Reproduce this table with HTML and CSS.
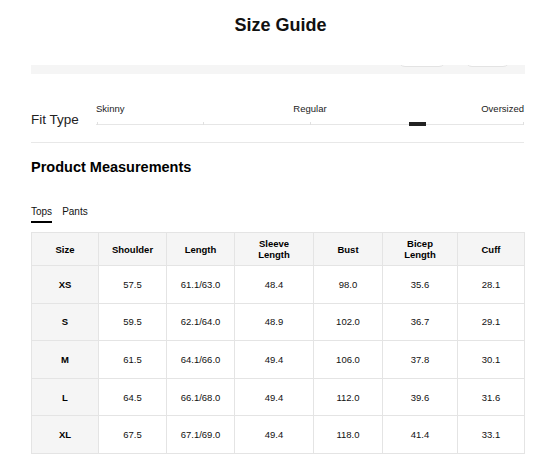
FILE: index.html
```html
<!DOCTYPE html>
<html lang="en">
<head>
<meta charset="utf-8">
<title>Size Guide</title>
<link rel="stylesheet" href="styles.css">
</head>
<body>
<div class="page">
  <h1 class="title">Size Guide</h1>

  <div class="stub">
    <span class="pill pill-a"></span>
    <span class="pill pill-b"></span>
  </div>

  <section class="fit">
    <div class="fit-label">Fit Type</div>
    <div class="slider">
      <div class="slider-labels">
        <span class="lbl-left">Skinny</span>
        <span class="lbl-mid">Regular</span>
        <span class="lbl-right">Oversized</span>
      </div>
      <div class="track">
        <span class="tick t0"></span>
        <span class="tick t25"></span>
        <span class="tick t50"></span>
        <span class="tick t75"></span>
        <span class="tick t100"></span>
        <span class="handle"></span>
      </div>
    </div>
  </section>

  <h2 class="section-title">Product Measurements</h2>

  <div class="tabs">
    <span class="tab active">Tops</span>
    <span class="tab">Pants</span>
  </div>

  <table class="sizes">
    <colgroup>
      <col class="c-size"><col class="c-shoulder"><col class="c-length"><col class="c-sleeve"><col class="c-bust"><col class="c-bicep"><col class="c-cuff">
    </colgroup>
    <thead>
      <tr>
        <th>Size</th><th>Shoulder</th><th>Length</th><th>Sleeve<br>Length</th><th>Bust</th><th>Bicep<br>Length</th><th>Cuff</th>
      </tr>
    </thead>
    <tbody>
      <tr><th>XS</th><td>57.5</td><td>61.1/63.0</td><td>48.4</td><td>98.0</td><td>35.6</td><td>28.1</td></tr>
      <tr><th>S</th><td>59.5</td><td>62.1/64.0</td><td>48.9</td><td>102.0</td><td>36.7</td><td>29.1</td></tr>
      <tr><th>M</th><td>61.5</td><td>64.1/66.0</td><td>49.4</td><td>106.0</td><td>37.8</td><td>30.1</td></tr>
      <tr><th>L</th><td>64.5</td><td>66.1/68.0</td><td>49.4</td><td>112.0</td><td>39.6</td><td>31.6</td></tr>
      <tr><th>XL</th><td>67.5</td><td>67.1/69.0</td><td>49.4</td><td>118.0</td><td>41.4</td><td>33.1</td></tr>
    </tbody>
  </table>
</div>
</body>
</html>
```

FILE: styles.css
```css
* { box-sizing: border-box; }

html, body {
  margin: 0;
  padding: 0;
  background: #fff;
}

body {
  font-family: "Liberation Sans", Arial, sans-serif;
  color: #111;
}

.page {
  padding: 0 15px 0 31px;
  width: 540px;
}

.title {
  margin: 0;
  height: 50px;
  line-height: 50px;
  font-size: 18px;
  font-weight: bold;
  text-align: center;
  padding-left: 5px;
  color: #111;
}

.stub {
  margin-top: 15px;
  height: 9px;
  background: #f5f5f5;
  overflow: hidden;
  display: flex;
  justify-content: flex-end;
  align-items: flex-start;
  padding-right: 15px;
  gap: 19px;
}

.pill {
  display: block;
  margin-top: -12px;
  height: 14px;
  background: #fff;
  border: 1px solid #e3e3e3;
  border-radius: 7px;
}

.pill-a { width: 48px; }
.pill-b { width: 45px; }

.fit {
  height: 69px;
  display: flex;
  align-items: flex-end;
  padding-bottom: 13px;
  border-bottom: 1px solid #e8e8e8;
  margin-right: 1px;
}

.fit-label {
  width: 65px;
  font-size: 13.5px;
  line-height: 16px;
  color: #222;
  padding-bottom: 1px;
}

.slider {
  flex: 1;
  display: flex;
  flex-direction: column;
  margin-bottom: 4px;
}

.slider-labels {
  display: grid;
  grid-template-columns: 1fr auto 1fr;
  font-size: 9.5px;
  line-height: 12px;
  color: #222;
}

.lbl-left { justify-self: start; }
.lbl-mid { justify-self: center; }
.lbl-right { justify-self: end; }

.track {
  position: relative;
  margin-top: 9px;
  height: 1px;
  background: #e6e6e6;
}

.tick {
  position: absolute;
  top: -2px;
  width: 1px;
  height: 3px;
  background: #e0e0e0;
}

.t0 { left: 1px; }
.t25 { left: 25%; }
.t50 { left: 50%; }
.t75 { left: 75%; }
.t100 { right: 0; }

.handle {
  position: absolute;
  left: 75%;
  top: -2px;
  width: 17px;
  height: 4px;
  margin-left: -8px;
  background: #222;
}

.section-title {
  margin: 14px 0 0;
  font-size: 14.5px;
  line-height: 20px;
  font-weight: bold;
  color: #000;
}

.tabs {
  margin-top: 29px;
  display: flex;
  gap: 10px;
  align-items: flex-start;
}

.tab {
  font-size: 10px;
  line-height: 12px;
  padding-bottom: 3px;
  border-bottom: 2px solid transparent;
  color: #111;
}

.tab.active {
  border-bottom-color: #000;
}

.sizes {
  margin-top: 9px;
  width: 494px;
  border-collapse: collapse;
  table-layout: fixed;
  font-size: 9.5px;
  color: #111;
}

.c-size { width: 67px; }
.c-shoulder { width: 68px; }
.c-length { width: 68px; }
.c-sleeve { width: 79px; }
.c-bust { width: 69px; }
.c-bicep { width: 75px; }
.c-cuff { width: 67px; }

.sizes th,
.sizes td {
  border: 1px solid #e4e4e4;
  padding: 0;
  text-align: center;
  vertical-align: middle;
}

.sizes thead tr { height: 33px; }
.sizes tbody tr { height: 37.6px; }

.sizes thead th {
  background: #f5f5f5;
  font-weight: bold;
  line-height: 11px;
  color: #000;
}

.sizes tbody th {
  background: #f5f5f5;
  font-weight: bold;
  color: #000;
}

.sizes td {
  background: #fff;
  font-weight: normal;
}
```
